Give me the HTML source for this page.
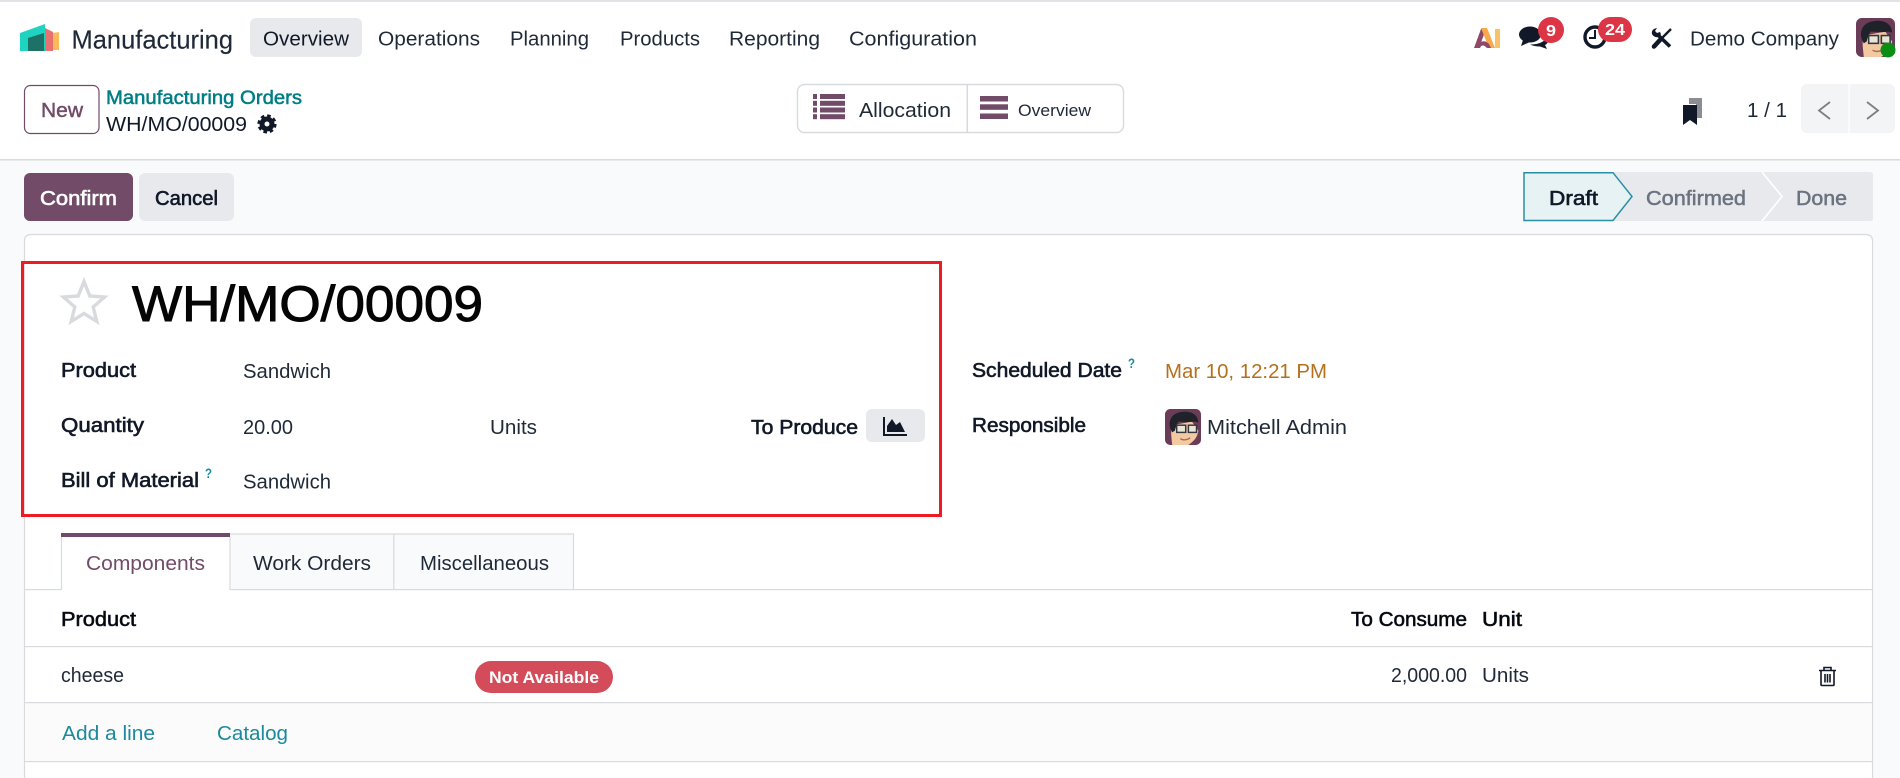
<!DOCTYPE html>
<html lang="en">
<head>
<meta charset="utf-8">
<title>WH/MO/00009 - Manufacturing</title>
<style>
html,body{margin:0;padding:0;width:1900px;height:778px;overflow:hidden;background:#fff}
svg{display:block}
text{font-family:"Liberation Sans",sans-serif;font-size:20px;fill:#1f2937}
.m{stroke:currentColor;stroke-width:.6;color:#111827;fill:#111827}
.d{fill:#111827}
</style>
</head>
<body>
<svg xmlns="http://www.w3.org/2000/svg" width="1900" height="778" viewBox="0 0 1900 778">
<defs>
<symbol id="av" viewBox="0 0 40 40">
<rect width="40" height="40" rx="6" fill="#6b3c58"/>
<path d="M8 40C7 30 6 24 8 18L30 14L37 24C36 33 30 37 26 40Z" fill="#f2c9a0"/>
<path d="M6 22C3 12 8 4 20 3C30 2 37 7 37 15L33 14C27 15 20 14 15 14C13 17 12 20 11 24L8 26Z" fill="#1f2329"/>
<rect x="13" y="18" width="10" height="8" fill="#e9e4d8" stroke="#33363c" stroke-width="1.6"/>
<rect x="26" y="18" width="9" height="8" fill="#e9e4d8" stroke="#33363c" stroke-width="1.6"/>
<path d="M17 33Q22 36 28 32" stroke="#b0624f" stroke-width="1.4" fill="none"/>
</symbol>
</defs>

<!-- page regions -->
<rect x="0" y="0" width="1900" height="778" fill="#fff"/>
<rect x="0" y="0" width="1900" height="2" fill="#e2e3e6"/>
<rect x="0" y="159" width="1900" height="619" fill="#f9fafb"/>
<rect x="0" y="159" width="1900" height="1.5" fill="#d8dadd"/>

<!-- brand -->
<polygon points="20,33 45,24 45,51 20,51" fill="#1ed3c0"/>
<polygon points="28,38 44,33 44,51 28,51" fill="#1e7166"/>
<polygon points="45,28 53,32 53,51 45,51" fill="#e8716f"/>
<polygon points="53,33 59,32 59,50 53,50" fill="#fcb95c"/>
<text x="71.500" y="48.500" style="font-size:26px;stroke:#1f2937;stroke-width:.15" textLength="161.500" lengthAdjust="spacingAndGlyphs">Manufacturing</text>

<!-- nav -->
<rect x="250" y="18" width="112" height="39" rx="6" fill="#e7e9ed"/>
<text x="263" y="45.500" class="d" textLength="86" lengthAdjust="spacingAndGlyphs">Overview</text>
<text x="378" y="45.500" textLength="102" lengthAdjust="spacingAndGlyphs">Operations</text>
<text x="510" y="45.500" textLength="79" lengthAdjust="spacingAndGlyphs">Planning</text>
<text x="620" y="45.500" textLength="80" lengthAdjust="spacingAndGlyphs">Products</text>
<text x="729" y="45.500" textLength="91" lengthAdjust="spacingAndGlyphs">Reporting</text>
<text x="849" y="45.500" textLength="128" lengthAdjust="spacingAndGlyphs">Configuration</text>

<!-- systray -->
<path d="M1481 29H1486L1479 48H1474Z" fill="#8d4a68"/>
<path d="M1481 28H1487L1495 48H1489Z" fill="#f8a94c"/>
<path d="M1476 48Q1482 37 1489 44L1491 48H1487Q1482 43 1480 48Z" fill="#8d4a68"/>
<rect x="1495" y="29" width="5" height="19" fill="#fcc069"/>
<ellipse cx="1530" cy="34.500" rx="11" ry="8" fill="#111827"/>
<path d="M1523 40L1521 46L1530 42Z" fill="#111827"/>
<path d="M1530 44.500Q1540 45 1546 39L1548 42Q1547 44 1545 45L1547 49L1540 46.500Q1534 46.500 1530 44.500Z" fill="#111827"/>
<circle cx="1551" cy="30" r="13" fill="#dc3545"/>
<text x="1546" y="36" style="font-size:16px;font-weight:700;fill:#fff" textLength="10" lengthAdjust="spacingAndGlyphs">9</text>
<circle cx="1595" cy="37" r="10" fill="none" stroke="#111827" stroke-width="3.4"/>
<path d="M1595 30V38H1589" fill="none" stroke="#111827" stroke-width="2"/>
<rect x="1598" y="17" width="34" height="25" rx="12.500" fill="#dc3545"/>
<text x="1605" y="35" style="font-size:16px;font-weight:700;fill:#fff" textLength="20" lengthAdjust="spacingAndGlyphs">24</text>
<!-- tools: wrench + screwdriver -->
<path d="M1659 36L1670 46.500" stroke="#111827" stroke-width="3.600"/>
<path d="M1657 28Q1651 29 1652 34Q1654 38 1659 37Q1662 35 1660 32L1657 33L1655 31Z" fill="#111827"/>
<path d="M1671 29L1662 38" stroke="#111827" stroke-width="2.400"/>
<path d="M1660 40L1654 46.500" stroke="#111827" stroke-width="4.600" stroke-linecap="round"/>
<text x="1690" y="45.500" textLength="149" lengthAdjust="spacingAndGlyphs">Demo Company</text>
<use href="#av" x="1856" y="18" width="39" height="39"/>
<circle cx="1888" cy="50" r="7.500" fill="#0a8f14"/>

<!-- control panel -->
<rect x="24.500" y="85.500" width="74.500" height="48" rx="6" fill="#fff" stroke="#714b67" stroke-width="1.200"/>
<text x="41" y="117" class="m" style="color:#714b67;fill:#714b67;stroke-width:.45" textLength="42" lengthAdjust="spacingAndGlyphs">New</text>
<text x="106" y="104" class="m" style="color:#017e84;fill:#017e84;font-size:19px;stroke-width:.5" textLength="196" lengthAdjust="spacingAndGlyphs">Manufacturing Orders</text>
<text x="106" y="131" class="d" textLength="141" lengthAdjust="spacingAndGlyphs">WH/MO/00009</text>
<circle cx="267" cy="124" r="5" fill="none" stroke="#111827" stroke-width="5"/>
<circle cx="267" cy="124" r="8.300" fill="none" stroke="#111827" stroke-width="2.600" stroke-dasharray="3.600 2.900"/>

<rect x="797.500" y="84.500" width="326" height="48" rx="7" fill="#fff" stroke="#d8dadd" stroke-width="1.400"/>
<rect x="966.500" y="84.500" width="1.600" height="48" fill="#d8dadd"/>
<g fill="#714b67">
<rect x="813" y="94" width="4" height="5"/><rect x="820" y="94" width="25" height="5"/>
<rect x="813" y="100.800" width="4" height="5"/><rect x="820" y="100.800" width="25" height="5"/>
<rect x="813" y="107.500" width="4" height="5"/><rect x="820" y="107.500" width="25" height="5"/>
<rect x="813" y="114.200" width="4" height="5"/><rect x="820" y="114.200" width="25" height="5"/>
<rect x="980" y="96" width="28" height="5.500"/><rect x="980" y="104.300" width="28" height="5.500"/><rect x="980" y="113.500" width="28" height="5.500"/>
</g>
<text x="859" y="117" textLength="92" lengthAdjust="spacingAndGlyphs">Allocation</text>
<text x="1018" y="116" style="font-size:16.500px" textLength="73" lengthAdjust="spacingAndGlyphs">Overview</text>

<path d="M1689 98H1702V118H1696V104H1689Z" fill="#8b8d91"/>
<path d="M1683 105H1697V125L1690 120L1683 125Z" fill="#111827"/>
<text x="1747" y="117" textLength="40" lengthAdjust="spacingAndGlyphs">1 / 1</text>
<rect x="1801" y="84" width="94" height="49" rx="6" fill="#f3f4f6"/>
<rect x="1848.500" y="84" width="1.200" height="49" fill="#fff"/>
<path d="M1830 102L1819 110.500L1830 119" fill="none" stroke="#7b7e83" stroke-width="1.800"/>
<path d="M1867 102L1878 110.500L1867 119" fill="none" stroke="#7b7e83" stroke-width="1.800"/>

<!-- action buttons -->
<rect x="24" y="173" width="109" height="48" rx="6" fill="#714b67"/>
<text x="40" y="205" class="m" style="color:#fff;fill:#fff" textLength="77" lengthAdjust="spacingAndGlyphs">Confirm</text>
<rect x="139" y="173" width="95" height="48" rx="6" fill="#e7e9ed"/>
<text x="155" y="205" class="m" textLength="63" lengthAdjust="spacingAndGlyphs">Cancel</text>

<!-- statusbar -->
<path d="M1610 172H1870Q1873 172 1873 175V218Q1873 221 1870 221H1610Z" fill="#e7e9ed"/>
<path d="M1762 172L1782 196.500L1762 221" fill="none" stroke="#fff" stroke-width="1.600"/>
<polygon points="1524,172.700 1613,172.700 1632,196.500 1613,220.500 1524,220.500" fill="#e6f2f3" stroke="#2a8fa5" stroke-width="1.500"/>
<text x="1549" y="205" class="m" textLength="49" lengthAdjust="spacingAndGlyphs">Draft</text>
<text x="1646" y="205" class="m" style="color:#6b7280;fill:#6b7280;stroke-width:.5" textLength="100" lengthAdjust="spacingAndGlyphs">Confirmed</text>
<text x="1796" y="205" class="m" style="color:#6b7280;fill:#6b7280;stroke-width:.5" textLength="51" lengthAdjust="spacingAndGlyphs">Done</text>

<!-- sheet -->
<path d="M24.500 790V241Q24.500 234.500 31 234.500H1865.500Q1872.500 234.500 1872.500 241V790Z" fill="#fff" stroke="#d8dadd" stroke-width="1.200"/>

<!-- title group -->
<polygon points="84,281.500 89.800,296 104.500,297 93.200,307 96.800,321.500 84,313.500 71.200,321.500 74.800,307 63.500,297 78.200,296" fill="#fff" stroke="#d8dadd" stroke-width="3.400"/>
<text x="132" y="321" style="font-size:50px;fill:#050505;stroke:#050505;stroke-width:1" textLength="351" lengthAdjust="spacingAndGlyphs">WH/MO/00009</text>

<text x="61" y="377" class="m" textLength="75" lengthAdjust="spacingAndGlyphs">Product</text>
<text x="243" y="378" textLength="88" lengthAdjust="spacingAndGlyphs">Sandwich</text>
<text x="61" y="432" class="m" textLength="83" lengthAdjust="spacingAndGlyphs">Quantity</text>
<text x="243" y="434" textLength="50" lengthAdjust="spacingAndGlyphs">20.00</text>
<text x="490" y="434" textLength="47" lengthAdjust="spacingAndGlyphs">Units</text>
<text x="751" y="434" class="m" textLength="107" lengthAdjust="spacingAndGlyphs">To Produce</text>
<rect x="866" y="409" width="59" height="33" rx="6" fill="#e7e9ed"/>
<path d="M884 417V435H907" fill="none" stroke="#111827" stroke-width="2"/>
<path d="M887 432V426L892 419L896 425L900 422L905 432Z" fill="#111827"/>
<text x="61" y="487" class="m" textLength="138" lengthAdjust="spacingAndGlyphs">Bill of Material</text>
<text x="205" y="478" style="font-size:14px;fill:#1a8a9c;font-weight:700" textLength="7" lengthAdjust="spacingAndGlyphs">?</text>
<text x="243" y="488.500" textLength="88" lengthAdjust="spacingAndGlyphs">Sandwich</text>

<text x="972" y="377" class="m" textLength="150" lengthAdjust="spacingAndGlyphs">Scheduled Date</text>
<text x="1128" y="368" style="font-size:14px;fill:#1a8a9c;font-weight:700" textLength="7" lengthAdjust="spacingAndGlyphs">?</text>
<text x="1165" y="378" style="fill:#b5701e" textLength="162" lengthAdjust="spacingAndGlyphs">Mar 10, 12:21 PM</text>
<text x="972" y="432" class="m" textLength="114" lengthAdjust="spacingAndGlyphs">Responsible</text>
<use href="#av" x="1165" y="409" width="36" height="36"/>
<text x="1207" y="434" textLength="140" lengthAdjust="spacingAndGlyphs">Mitchell Admin</text>

<!-- annotation -->
<rect x="22.500" y="262.500" width="918" height="253" fill="none" stroke="#ed1c24" stroke-width="3"/>

<!-- tabs -->
<rect x="230" y="534" width="344" height="55" fill="#f9fafb"/>
<path d="M230 534H573.500V589M393.800 534V589" fill="none" stroke="#d8dadd" stroke-width="1.200"/>
<rect x="24" y="589" width="1848" height="1.200" fill="#d8dadd"/>
<rect x="61" y="537" width="169" height="54" fill="#fff"/>
<path d="M61.500 537V590M230 537V590" fill="none" stroke="#d8dadd" stroke-width="1.200"/>
<rect x="61" y="533" width="169" height="4" fill="#714b67"/>
<text x="86" y="570" style="fill:#714b67" textLength="119" lengthAdjust="spacingAndGlyphs">Components</text>
<text x="253" y="570" textLength="118" lengthAdjust="spacingAndGlyphs">Work Orders</text>
<text x="420" y="570" textLength="129" lengthAdjust="spacingAndGlyphs">Miscellaneous</text>

<!-- table -->
<rect x="24" y="646" width="1848" height="1.200" fill="#d8dadd"/>
<text x="61" y="626" class="m" style="fill:#050505" textLength="75" lengthAdjust="spacingAndGlyphs">Product</text>
<text x="1351" y="626" class="m" style="fill:#050505" textLength="116" lengthAdjust="spacingAndGlyphs">To Consume</text>
<text x="1482" y="626" class="m" style="fill:#050505" textLength="40" lengthAdjust="spacingAndGlyphs">Unit</text>

<text x="61" y="682" textLength="63" lengthAdjust="spacingAndGlyphs">cheese</text>
<rect x="475" y="661" width="138" height="32" rx="16" fill="#d44c59"/>
<text x="489" y="683" style="font-size:16.500px;font-weight:700;fill:#fff" textLength="110" lengthAdjust="spacingAndGlyphs">Not Available</text>
<text x="1391" y="682" textLength="76" lengthAdjust="spacingAndGlyphs">2,000.00</text>
<text x="1482" y="682" textLength="47" lengthAdjust="spacingAndGlyphs">Units</text>
<path d="M1819 670.500H1836M1824 670V667.500H1831V670M1821 671V684.500Q1821 685.500 1822 685.500H1833Q1834 685.500 1834 684.500V671M1825 674V682.500M1827.500 674V682.500M1830 674V682.500" fill="none" stroke="#111827" stroke-width="1.600"/>

<rect x="25" y="702" width="1847" height="59" fill="#fbfbfb"/>
<rect x="24" y="702" width="1848" height="1.200" fill="#d8dadd"/>
<rect x="24" y="761" width="1848" height="1.200" fill="#d8dadd"/>
<text x="62" y="740" style="fill:#1a8a9c" textLength="93" lengthAdjust="spacingAndGlyphs">Add a line</text>
<text x="217" y="740" style="fill:#1a8a9c" textLength="71" lengthAdjust="spacingAndGlyphs">Catalog</text>
</svg>
</body>
</html>
